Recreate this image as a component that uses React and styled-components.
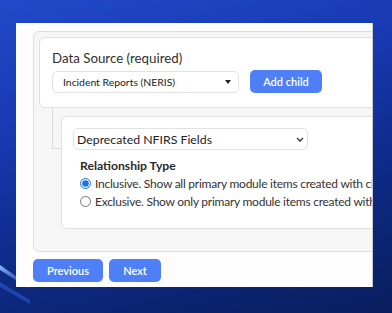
import React, { useState } from 'react';
import styled, { createGlobalStyle } from 'styled-components';

const GlobalStyle = createGlobalStyle`
  html, body {
    margin: 0;
    padding: 0;
    width: 392px;
    height: 313px;
    overflow: hidden;
  }
  body {
    font-family: Lato, "Open Sans", sans-serif;
    color: #333;
    background: linear-gradient(165deg, #2149c9 0%, #1738af 35%, #0d2a86 65%, #0a1e5e 100%);
  }
`;

const Desktop = styled.div`
  position: relative;
  width: 392px;
  height: 313px;
  padding: 23px 19px 0 16px;
  box-sizing: border-box;
`;

const Wallpaper = styled.svg`
  position: absolute;
  left: 0;
  top: 0;
  pointer-events: none;
`;

const Window = styled.div`
  position: relative;
  width: 357px;
  height: 264px;
  background: #fdfdfd;
  border-right: 1px solid #c9ccd4;
  box-sizing: border-box;
  overflow: hidden;
  padding: 8px 0 0 17px;
`;

const Tree = styled.div`
  width: 400px;
  height: 221px;
  box-sizing: border-box;
  background: #f6f6f6;
  border: 1px solid #dedede;
  border-radius: 6px;
  padding: 5px;
`;

const Card = styled.div`
  background: #fff;
  border: 1px solid #e0e0e0;
  border-radius: 6px;
  box-sizing: border-box;
`;

const SourceCard = styled(Card)`
  height: 71px;
  padding: 12px 12px 0;
`;

const Label = styled.div`
  font-size: 13.3px;
  line-height: 16px;
  color: #2f2f2f;
`;

const Row = styled.div`
  display: flex;
  align-items: center;
  gap: 11px;
  margin-top: 4px;
`;

const Select = styled.div`
  display: flex;
  align-items: center;
  justify-content: space-between;
  box-sizing: border-box;
  width: ${p => p.$width}px;
  height: 22px;
  padding: 0 ${p => p.$right}px 0 ${p => p.$pad}px;
  border: 1px solid #e2e2e2;
  border-radius: 5px;
  background: #fff;
  font-size: ${p => p.$size}px;
  color: #222;
`;

const Caret = styled.span`
  width: 0;
  height: 0;
  border-left: 3px solid transparent;
  border-right: 3px solid transparent;
  border-top: 4px solid #222;
`;

const Button = styled.button`
  width: ${p => p.$width}px;
  height: 23px;
  padding: 0;
  border: none;
  border-radius: 5px;
  background: #4f7ff6;
  color: #fff;
  font-family: Lato, sans-serif;
  font-size: 11px;
  font-weight: 600;
  text-align: center;
  cursor: pointer;
`;

const ChildRow = styled.div`
  display: flex;
  align-items: flex-start;
  padding-left: 13px;
`;

const Connector = styled.div`
  width: 8px;
  height: 40px;
  border-left: 1px solid #dadada;
  border-bottom: 1px solid #dadada;
  flex-shrink: 0;
`;

const ChildCard = styled(Card)`
  flex: 1;
  margin-top: 8px;
  height: 113px;
  padding: 11px 11px 0;
`;

const Section = styled.div`
  padding-left: 7px;
  margin-top: 7px;
`;

const Heading = styled.div`
  font-size: 12.2px;
  font-weight: 700;
  line-height: 17px;
  color: #2a2a2a;
`;

const Option = styled.label`
  display: flex;
  align-items: center;
  gap: 4px;
  height: 18px;
  font-size: 12px;
  letter-spacing: -0.25px;
  color: #333;
  white-space: nowrap;

  input {
    margin: 0;
    width: 11px;
    height: 11px;
    accent-color: #1a73e8;
  }
`;

const Footer = styled.div`
  display: flex;
  gap: 6px;
  margin-top: 7px;
`;

function Chevron() {
  return (
    <svg width="8" height="5" viewBox="0 0 8 5">
      <path d="M1 1 L4 4 L7 1" fill="none" stroke="#333" strokeWidth="1.3" />
    </svg>
  );
}

export default function App() {
  const [kind, setKind] = useState('inclusive');

  return (
    <Desktop>
      <GlobalStyle />
      <Wallpaper width="392" height="313" viewBox="0 0 392 313">
        <defs>
          <linearGradient id="beam" x1="0" y1="0" x2="1" y2="1">
            <stop offset="0" stopColor="#8fc0ff" stopOpacity="0.95" />
            <stop offset="1" stopColor="#2a5de0" stopOpacity="0.3" />
          </linearGradient>
        </defs>
        <path d="M0 265 L30 286 L30 289 L0 270 Z" fill="url(#beam)" />
        <path d="M0 282 L30 300 L30 304 L0 287 Z" fill="#2f62dc" opacity="0.5" />
      </Wallpaper>
      <Window>
        <Tree>
          <SourceCard>
            <Label>Data Source (required)</Label>
            <Row>
              <Select $width={187} $pad={10} $right={7} $size={10.4}>
                Incident Reports (NERIS)
                <Caret />
              </Select>
              <Button $width={72}>Add child</Button>
            </Row>
          </SourceCard>
          <ChildRow>
            <Connector />
            <ChildCard>
              <Select $width={235} $pad={3} $right={3} $size={12.3}>
                Deprecated NFIRS Fields
                <Chevron />
              </Select>
              <Section>
                <Heading>Relationship Type</Heading>
                <Option>
                  <input
                    type="radio"
                    name="rel"
                    checked={kind === 'inclusive'}
                    onChange={() => setKind('inclusive')}
                  />
                  Inclusive. Show all primary module items created with child items
                </Option>
                <Option>
                  <input
                    type="radio"
                    name="rel"
                    checked={kind === 'exclusive'}
                    onChange={() => setKind('exclusive')}
                  />
                  Exclusive. Show only primary module items created with child items
                </Option>
              </Section>
            </ChildCard>
          </ChildRow>
        </Tree>
        <Footer>
          <Button $width={70}>Previous</Button>
          <Button $width={52}>Next</Button>
        </Footer>
      </Window>
    </Desktop>
  );
}
